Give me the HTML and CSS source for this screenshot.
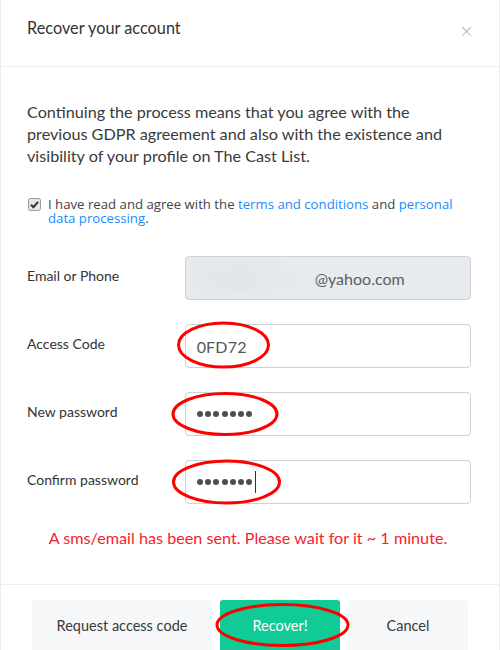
FILE: index.html
```html
<!DOCTYPE html>
<html>
<head>
<meta charset="utf-8">
<link rel="stylesheet" href="styles.css">
</head>
<body>
<div class="modal">
  <div class="header">
    <div class="title">Recover your account</div>
    <div class="close">×</div>
  </div>
  <div class="body">
    <p class="intro">Continuing the process means that you agree with the previous GDPR agreement and also with the existence and visibility of your profile on The Cast List.</p>
    <label class="agree">
      <span class="check"><svg viewBox="0 0 13 13" width="13" height="13"><rect x="0.5" y="0.5" width="12" height="12" rx="2" fill="#e6e6e6" stroke="#9a9a9a"/><path d="M3 6.8 L5.4 9.2 L10 3.8" fill="none" stroke="#333" stroke-width="2"/></svg></span>
      <span>I have read and agree with the <a href="#">terms and conditions</a> and <a href="#">personal data processing</a>.</span>
    </label>
    <div class="form">
      <div class="row">
        <div class="lbl">Email or Phone</div>
        <div class="field disabled"><span class="blur"></span><span class="email">@yahoo.com</span></div>
      </div>
      <div class="row">
        <div class="lbl">Access Code</div>
        <div class="field"><span class="val">0FD72</span></div>
      </div>
      <div class="row">
        <div class="lbl">New password</div>
        <div class="field"><span class="dots"><i></i><i></i><i></i><i></i><i></i><i></i><i></i></span></div>
      </div>
      <div class="row">
        <div class="lbl">Confirm password</div>
        <div class="field"><span class="dots"><i></i><i></i><i></i><i></i><i></i><i></i><i></i></span><span class="caret"></span></div>
      </div>
    </div>
    <div class="msg">A sms/email has been sent. Please wait for it ~ 1 minute.</div>
  </div>
  <div class="footer">
    <button class="btn">Request access code</button>
    <button class="btn primary">Recover!</button>
    <button class="btn">Cancel</button>
  </div>
  <svg class="marks" width="500" height="650" viewBox="0 0 500 650">
    <ellipse cx="223.5" cy="345" rx="45" ry="22" />
    <ellipse cx="225" cy="414" rx="52" ry="20.5" />
    <ellipse cx="226.5" cy="482" rx="53" ry="21" />
    <ellipse cx="282.5" cy="625" rx="65.5" ry="20.5" />
  </svg>
</div>
</body>
</html>
```
FILE: styles.css
```css
* { box-sizing: border-box; }
html, body { margin: 0; padding: 0; background: #fff; }
body { font-family: "Lato", "Noto Sans", sans-serif; color: #383838; }
.modal {
  position: relative;
  width: 500px;
  height: 650px;
  border-left: 1px solid #ececec;
  border-right: 1px solid #ececec;
  overflow: hidden;
}
.header {
  height: 67px;
  border-bottom: 1px solid #ededed;
  display: flex;
  justify-content: space-between;
  align-items: flex-start;
  padding: 18px 26px 0 26px;
}
.title { font-size: 16.3px; line-height: 20px; color: #333; }
.close { font-size: 18px; color: #b5b5b5; line-height: 20px; margin-top: 3px; margin-right: -1px; font-family: "DejaVu Sans", sans-serif; font-weight: 300; }
.body { padding: 34px 28px 0 26px; }
.intro { margin: 0; font-size: 16.2px; line-height: 22px; color: #3a3a3a; }
.agree {
  display: flex;
  gap: 7px;
  margin-top: 30px;
  font-family: "Open Sans", sans-serif;
  font-size: 13.2px;
  line-height: 14px;
  color: #444;
  padding-left: 1px;
}
.check { flex: none; padding-top: 1px; }
.agree a { color: #1a8cff; text-decoration: none; }
.form { margin-top: 31px; display: flex; flex-direction: column; gap: 24px; }
.row { display: flex; align-items: center; }
.lbl { width: 158px; font-size: 14px; color: #333; margin-top: -6px; }
.field {
  width: 287px;
  height: 44px;
  border: 1px solid #ccd1d7;
  border-radius: 4px;
  display: flex;
  align-items: center;
  padding-left: 11px;
  font-size: 16px;
  color: #4e5358;
  position: relative;
}
.field.disabled { background: #e8ebee; padding-left: 4px; }
.blur {
  width: 122px;
  height: 30px;
  background: linear-gradient(90deg, #e5e8eb, #e2e6ea 40%, #e6e9ec 80%, #e8ebee);
  filter: blur(3px);
}
.email { margin-left: 3px; color: #595e63; }
.val { color: #555; letter-spacing: 0.2px; }
.dots { display: flex; gap: 2.3px; }
.dots i { display: block; width: 6px; height: 6px; border-radius: 50%; background: #4a5056; }
.caret { width: 1px; height: 22px; background: #333; margin-left: 3px; }
.msg {
  margin-top: 24px;
  text-align: center;
  color: #f5232b;
  font-size: 16.2px;
  line-height: 20px;
  padding-right: 2px;
}
.footer {
  position: absolute;
  left: 0; right: 0;
  top: 584px;
  border-top: 1px solid #ededed;
  display: flex;
  justify-content: center;
  gap: 8px;
  padding-top: 15px;
}
.btn {
  height: 52px;
  border: none;
  border-radius: 3px;
  background: #f6f7f9;
  font-family: "Lato", "Noto Sans", sans-serif;
  font-size: 14.5px;
  color: #3a3a3a;
  width: 120px;
  padding: 0 0 2px 0;
}
.btn:first-child { width: 180px; }
.btn.primary { background: #10cb95; color: #fff; }
.marks { position: absolute; left: -1px; top: 0; pointer-events: none; }
.marks ellipse { fill: none; stroke: #f00; stroke-width: 3; }
```
